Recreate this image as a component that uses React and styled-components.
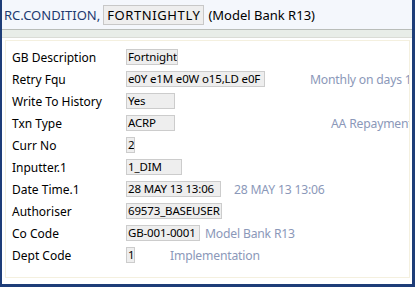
import React from "react";
import styled, { createGlobalStyle } from "styled-components";

const Global = createGlobalStyle`
  html, body { margin: 0; padding: 0; background: #ffffff; }
  * { box-sizing: border-box; }
`;

const Frame = styled.div`
  width: 415px;
  height: 287px;
  border-left: 2px solid #1e3d78;
  border-right: 3px solid #1e3d78;
  border-bottom: 3px solid #1e3d78;
  display: flex;
  flex-direction: column;
  font-family: "Noto Sans", sans-serif;
  font-size: 12px;
  color: #000;
  overflow: hidden;
`;

const Header = styled.div`
  height: 29px;
  background: #f4f7fc;
  display: flex;
  align-items: center;
  padding-left: 2px;
  font-size: 13px;
  white-space: nowrap;
`;

const AppName = styled.span`
  color: #1d3a70;
  margin-right: 3px;
`;

const KeyBox = styled.span`
  background: #eeeeee;
  border: 1px solid #c8c8c8;
  padding: 0 3px;
  letter-spacing: 0.6px;
  line-height: 18px;
  margin-right: 4px;
`;

const Band = styled.div`
  height: 9px;
  background: #e8ede8;
  border-top: 1px solid #b9bdb9;
  border-bottom: 1px solid #dadcd6;
`;

const Body = styled.div`
  flex: 1;
  padding: 2px 2px 6px 3px;
  background: #ffffff;
`;

const Panel = styled.div`
  height: 100%;
  border: 1px solid #f4f0df;
  padding: 5px 0 0 6px;
  display: flex;
  flex-direction: column;
  overflow: hidden;
`;

const Row = styled.div`
  display: flex;
  align-items: center;
  height: 22px;
  white-space: nowrap;
`;

const Label = styled.span`
  width: 114px;
  flex: none;
`;

const Value = styled.span`
  display: inline-block;
  flex: none;
  width: ${(p) => p.$w}px;
  height: 16px;
  line-height: 14px;
  font-size: 11.5px;
  letter-spacing: -0.15px;
  background: #eeeeee;
  border: 1px solid #cccccc;
  padding: 0 1px;
  overflow: hidden;
`;

const Enrich = styled.span`
  color: #8b98b9;
  font-size: 12.2px;
  letter-spacing: -0.2px;
  margin-left: ${(p) => p.$m}px;
`;

const rows = [
  { label: "GB Description", value: "Fortnight", w: 52 },
  { label: "Retry Fqu", value: "e0Y e1M e0W o15,LD e0F", w: 139, enrich: "Monthly on days 1", m: 45 },
  { label: "Write To History", value: "Yes", w: 49 },
  { label: "Txn Type", value: "ACRP", w: 49, enrich: "AA Repayment", m: 156 },
  { label: "Curr No", value: "2", w: 9 },
  { label: "Inputter.1", value: "1_DIM", w: 56 },
  { label: "Date Time.1", value: "28 MAY 13 13:06", w: 95, enrich: "28 MAY 13 13:06", m: 13 },
  { label: "Authoriser", value: "69573_BASEUSER", w: 96 },
  { label: "Co Code", value: "GB-001-0001", w: 74, enrich: "Model Bank R13", m: 5 },
  { label: "Dept Code", value: "1", w: 9, enrich: "Implementation", m: 35 },
];

export default function App() {
  return (
    <>
      <Global />
      <Frame>
        <Header>
          <AppName>RC.CONDITION,</AppName>
          <KeyBox>FORTNIGHTLY</KeyBox>
          <span>(Model Bank R13)</span>
        </Header>
        <Band />
        <Body>
          <Panel>
            {rows.map((r) => (
              <Row key={r.label}>
                <Label>{r.label}</Label>
                <Value $w={r.w}>{r.value}</Value>
                {r.enrich && <Enrich $m={r.m}>{r.enrich}</Enrich>}
              </Row>
            ))}
          </Panel>
        </Body>
      </Frame>
    </>
  );
}
